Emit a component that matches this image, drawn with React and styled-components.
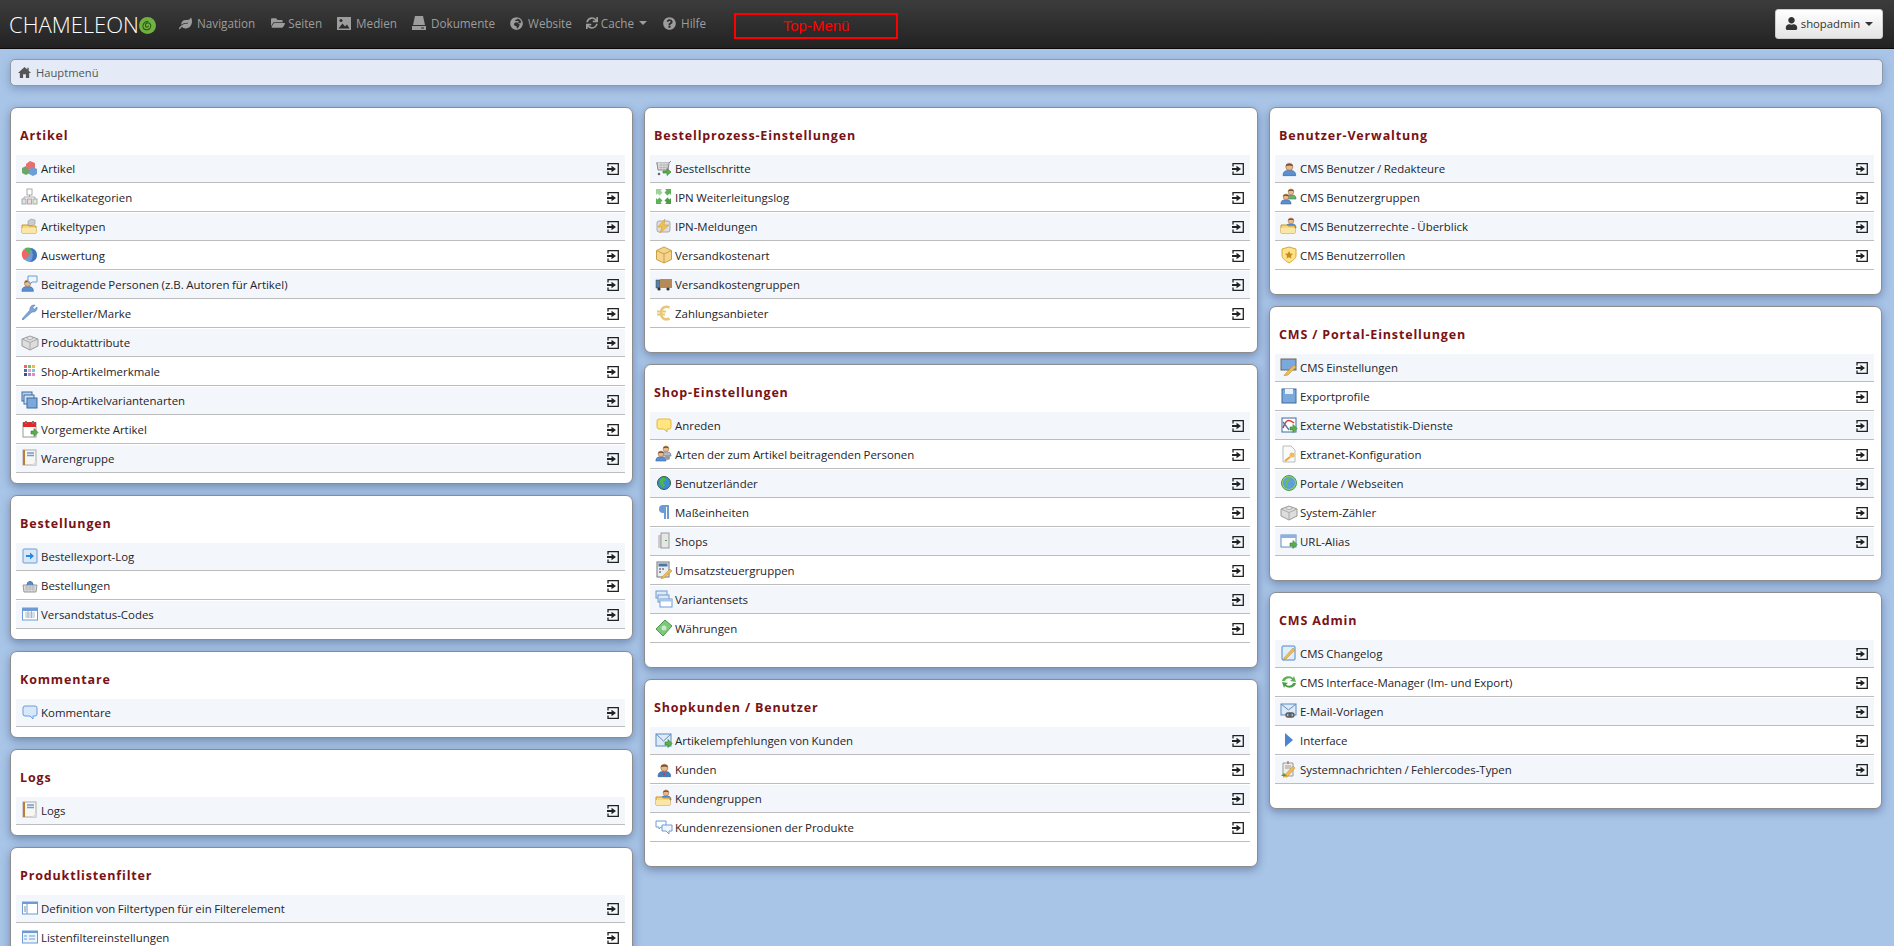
import React from 'react';
import styled, { createGlobalStyle } from 'styled-components';
import { FaLeaf, FaFolderOpen, FaGlobeAfrica, FaSync, FaQuestionCircle, FaUser } from 'react-icons/fa';

const Global = createGlobalStyle`
  html, body { margin: 0; padding: 0; height: 946px; overflow: hidden; background: #a8c4e7; }
  body { font-family: "Open Sans", "Noto Sans", sans-serif; font-size: 12px; color: #222; }
  * { box-sizing: border-box; }
`;

const TopBar = styled.header`
  height: 49px; display: flex; align-items: center; padding: 0 11px 0 9px;
  background: linear-gradient(#3c3c3c, #222222);
  border-bottom: 1px solid #0a0a0a;
`;
const Logo = styled.div`
  display: flex; align-items: center; width: 170px; color: #fff;
  font: 300 22px "Open Sans", sans-serif; letter-spacing: 0;
`;
const NavLink = styled.a`
  display: flex; align-items: center; gap: ${p => p.$gap || 5}px; color: #9d9d9d;
  font: 400 11.7px "Open Sans", sans-serif; margin-right: ${p => p.$mr || 15}px; height: 46px; padding-bottom: 2px;
  white-space: nowrap;
`;
const Caret = styled.span`
  display: inline-block; width: 0; height: 0; margin-left: 2px;
  border-top: 4px solid ${p => p.$c || '#9d9d9d'}; border-left: 4px solid transparent; border-right: 4px solid transparent;
`;
const TopMenu = styled.div`
  width: 164px; height: 26px; margin-left: 13px; margin-top: 3px; border: 2px solid #f00; color: #f00;
  font: 400 15px "Liberation Sans", sans-serif; display: flex; align-items: center; justify-content: center;
`;
const Spacer = styled.div`flex: 1;`;
const UserButton = styled.button`
  width: 108px; height: 30px; margin-bottom: 1px; border: 1px solid #ccc; border-radius: 3px;
  background: linear-gradient(#fff, #e4e4e4); color: #333; display: flex; align-items: center; justify-content: center; gap: 3px;
  font: 400 11.3px "Open Sans", sans-serif; padding: 0;
`;
const Page = styled.main`padding: 9.5px 11px 0 10px;`;
const Crumb = styled.nav`
  height: 27px; display: flex; align-items: center; gap: 5px; padding: 1px 6px 0 7px;
  background: #e4ebf7; border: 1px solid #8d98a8; border-radius: 5px;
  box-shadow: 0 3px 8px rgba(60, 80, 120, .35); color: #555; font-size: 11.2px;
`;
const Columns = styled.div`
  display: grid; grid-template-columns: 623px 614px 613px; column-gap: 11px; margin-top: 21px; align-items: start;
`;
const Column = styled.div`display: flex; flex-direction: column; gap: 11px;`;
const Card = styled.section`
  background: #fff; border: 1px solid #8d8d8d; border-radius: 7px; padding: 0 7px ${p => p.$tall ? 22.5 : 8.5}px 5px;
  box-shadow: 0 3px 9px rgba(50, 70, 110, .45);
`;
const Title = styled.h2`
  margin: 0; height: 47.5px; padding: 20px 0 0 4px; color: #7a1214;
  font: 700 12.5px/16px "Open Sans", sans-serif; letter-spacing: .84px;
`;
const Row = styled.div`
  height: 29px; display: flex; align-items: flex-start; position: relative;
  background: linear-gradient(${p => p.$odd ? '#f3f7fb' : '#fff'} 27px, #bdbdbd 27px, #bdbdbd 28px, #fff 28px);
  padding: 4px 5px 0 5px;
`;
const IconBox = styled.span`width: 20px; height: 20px; flex: none; display: block;`;
const Label = styled.span`flex: 1; line-height: 20px; font-size: 11.45px; word-spacing: -.5px; color: #24242c; white-space: nowrap;`;
const Go = styled.span`width: 13px; height: 20px; display: flex; align-items: center; color: #222;`;

const S = ({ children }) => <svg width="18" height="18" viewBox="0 0 18 18" style={{ display: 'block', marginTop: 0 }}>{children}</svg>;
const person = (x, y, shirt = '#5a8fd0', s = 1) => <g transform={`translate(${x} ${y}) scale(${s})`}><path d="M1 13c0-4 2-5 6-5s6 1 6 5z" fill={shirt} stroke="#2b5f9e" strokeWidth=".6" /><circle cx="7" cy="4.5" r="3.4" fill="#e9b98c" stroke="#8a5a30" strokeWidth=".5" /><path d="M3.6 4C4 1 10 1 10.4 4 8 3 6 3 3.6 4z" fill="#7a4a20" /></g>;
const folder = <><path d="M1 8h6l1 1h7v7H1z" fill="#f7d97c" stroke="#c9922b" /><path d="M1 11h14v5H1z" fill="#fbe7a5" /></>;
const arrow = <path d="M10 11h3V8.5l4 4-4 4V14h-3z" fill="#5cb04a" stroke="#2f7d2a" strokeWidth=".6" />;
const Bars = ({ c = '#6e9bd3' }) => <><rect x="1.5" y="3" width="15" height="12" fill="#fff" stroke={c} /><rect x="1.5" y="3" width="15" height="3" fill={c} /></>;
const corner = 'M1 1h6L5.500 2.500 7.500 4.500 4.500 7.500 2.500 5.500 1 7z';

const icons = {
  cubes: <S><path d="M1 9l4-2 4 2v5l-4 2-4-2z" fill="#6aa56a" /><path d="M5 5l4-3 5 2v5l-5 2-4-2z" fill="#e66f6f" /><path d="M8 10l4-2 4 2v5l-4 2-4-2z" fill="#6d9ed6" /></S>,
  tree: <S><rect x="6" y="1" width="5" height="6" fill="#fff" stroke="#aaa" /><path d="M8.5 7v2M3 11V9h11v2" fill="none" stroke="#aaa" /><rect x="1" y="11" width="4" height="5" fill="#d7e4f0" stroke="#aaa" /><rect x="6.5" y="11" width="4" height="5" fill="#f1d9d9" stroke="#aaa" /><rect x="12" y="11" width="4" height="5" fill="#dcedd4" stroke="#aaa" /></S>,
  boxfolder: <S><path d="M7 4l3-2 4 1v4l-4 2-3-1z" fill="#ccc" stroke="#999" strokeWidth=".6" />{folder}</S>,
  pie: <S><circle cx="9" cy="9" r="7" fill="#6d9ed6" /><path d="M9 9L3 3a8 8 0 0 1 7-1z" fill="#5bb25b" /><path d="M9 9L3 3a8 8 0 0 0 0 11z" fill="#e66" /><path d="M9 2a7 7 0 0 1 0 14 10 10 0 0 0 0-14z" fill="#4377bd" /></S>,
  personTalk: <S>{person(0, 4, '#5a8fd0', .95)}<path d="M7 1h9v6h-5l-2 2V7H7z" fill="#eef5fc" stroke="#6e9bd3" /></S>,
  wrench: <S><path d="M2 16l-1-1 8-9c-.5-2 1-5 4-5l1 .3-2.3 2.4 1.6 1.6L16 3c.6 3-2 5.6-5 5z" fill="#7fa6d8" stroke="#4f79ae" strokeWidth=".6" /></S>,
  lego: <S><path d="M1 6l8-3 8 3v7l-8 4-8-4z" fill="#ddd" stroke="#999" /><path d="M1 6l8 3.5 8-3.5M9 9.5V17" fill="none" stroke="#aaa" /><ellipse cx="9" cy="5" rx="3" ry="1.4" fill="#f2f2f2" stroke="#aaa" /></S>,
  grid: <S><g transform="translate(3 3)"><rect width="3" height="3" fill="#e66" /><rect x="4" width="3" height="3" fill="#6bc06b" /><rect x="8" width="3" height="3" fill="#f2b84b" /><rect y="4" width="3" height="3" fill="#4d6fa8" /><rect x="4" y="4" width="3" height="3" fill="#e9a1c2" /><rect x="8" y="4" width="3" height="3" fill="#7bc7d6" /><rect y="8" width="3" height="3" fill="#39528a" /><rect x="4" y="8" width="3" height="3" fill="#ad85d6" /><rect x="8" y="8" width="3" height="3" fill="#ea86c9" /></g></S>,
  windows: <S><rect x="1" y="1" width="10" height="9" fill="#b9d3ee" stroke="#3c6b9f" /><rect x="3" y="4" width="10" height="9" fill="#d2e2f3" stroke="#3c6b9f" /><rect x="6" y="7" width="10" height="10" fill="#7ba9dc" stroke="#3c6b9f" /></S>,
  calendar: <S><rect x="2" y="3" width="13" height="14" fill="#fff" stroke="#999" /><rect x="2" y="2" width="13" height="5" fill="#e02a2a" /><rect x="4" y="1" width="2" height="3" fill="#777" /><rect x="11" y="1" width="2" height="3" fill="#777" />{arrow}</S>,
  book: <S><rect x="2" y="1" width="13" height="15" fill="#f7f6f0" stroke="#aaa" /><rect x="2" y="1" width="2" height="15" fill="#c27a3a" /><path d="M6 4h7M6 6.5h7" stroke="#6e9bd3" strokeWidth="1.4" /><path d="M11 16l4-4v4z" fill="#ddd" /></S>,
  cart: <S><path d="M1 4h13l2-2" fill="none" stroke="#888" /><path d="M2 4l1 7h10l1-7" fill="#ddd" stroke="#888" /><path d="M4 6h9M4 8.5h9M6 4v7M9 4v7M12 4v7" stroke="#aaa" strokeWidth=".6" /><circle cx="4" cy="15" r="1.3" fill="#666" /><path d="M8 12h4V9.5l4 3.5-4 3.5V14H8z" fill="#5cb04a" stroke="#2f7d2a" strokeWidth=".6" /></S>,
  expand: <S><path d={corner} fill="#9fd29a" /><path d={corner} fill="#5fb058" transform="matrix(-1 0 0 1 17 0)" /><path d={corner} fill="#5fb058" transform="matrix(1 0 0 -1 0 17)" /><path d={corner} fill="#4d9b46" transform="matrix(-1 0 0 -1 17 17)" /></S>,
  bolt: <S><rect x="2" y="4" width="13" height="11" rx="2" fill="#ddd" stroke="#aaa" /><path d="M10 2L3 10h4l-2 6 9-8H9z" fill="#f2c14e" stroke="#c9922b" strokeWidth=".5" /></S>,
  box: <S><path d="M9 1l7.5 3.5v9L9 17l-7.5-3.5v-9z" fill="#f5d58c" stroke="#c9a04a" /><path d="M1.5 4.5L9 8l7.5-3.5M9 8v9" fill="none" stroke="#c9a04a" /></S>,
  truck: <S><rect x="1" y="5" width="4" height="8" fill="#5a7fa8" stroke="#344" strokeWidth=".5" /><rect x="5" y="4" width="12" height="9" fill="#b68a58" /><circle cx="4" cy="14" r="1.6" fill="#333" /><circle cx="13" cy="14" r="1.6" fill="#333" /></S>,
  euro: <S><path d="M14.500 3.500C10.500 1.500 6 3.500 6 9s4.500 7.500 8.500 5.500" fill="none" stroke="#e8c877" strokeWidth="2.600" /><path d="M2 7.500h9M2 10.500h8" stroke="#e8c877" strokeWidth="1.800" /></S>,
  bubbleY: <S><path d="M2 5a2 2 0 0 1 2-2h10a2 2 0 0 1 2 2v6a2 2 0 0 1-2 2h-2v3l-3-3H4a2 2 0 0 1-2-2z" fill="#ffe680" stroke="#e3b93c" /></S>,
  people: <S>{person(5, 0, '#b9b9b9', .85)}{person(0, 5, '#5a8fd0', .85)}<circle cx="12.5" cy="12.5" r="2.5" fill="#999" /></S>,
  globe: <S><circle cx="9" cy="9" r="6.5" fill="#3f87d8" stroke="#2a6b2a" /><path d="M5 5l4-2 2 3-3 2 2 3-2 3-3-4z" fill="#4cb54c" /></S>,
  pilcrow: <S><path d="M14 2H8a4 4 0 0 0 0 8h1v6h2V4h1v12h2z" fill="#6e9bd3" /></S>,
  server: <S><rect x="3" y="3" width="4" height="13" fill="#ccc" /><rect x="6" y="1" width="8" height="15" fill="#e6e6e6" stroke="#999" /><rect x="10" y="8" width="2" height="1" fill="#4a4" /></S>,
  calc: <S><rect x="2" y="1" width="12" height="15" fill="#e9eef3" stroke="#777" /><rect x="3.5" y="2.5" width="9" height="3" fill="#4d76a8" /><path d="M4 8h2M7 8h2M4 11h2" stroke="#777" strokeWidth="1.3" /><path d="M7 16l8-8 2 2-8 7-3 1z" fill="#f0bb54" stroke="#b9862a" strokeWidth=".5" /></S>,
  sets: <S><rect x="1" y="1" width="11" height="7" fill="#dde9f6" stroke="#6e9bd3" /><rect x="3" y="5" width="11" height="7" fill="#dde9f6" stroke="#6e9bd3" /><rect x="5" y="9" width="12" height="8" fill="#fff" stroke="#6e9bd3" /><rect x="5" y="9" width="12" height="2.5" fill="#a7c6ea" /></S>,
  money: <S><path d="M1 10l9-9 7 6-9 10z" fill="#7fc77f" stroke="#4a9a4a" /><circle cx="9" cy="9" r="2.5" fill="#c9eac9" /></S>,
  mailArrow: <S><rect x="1" y="3" width="15" height="12" fill="#dfeaf6" stroke="#5d8cc0" /><path d="M1 3l7.5 7L16 3" fill="none" stroke="#5d8cc0" />{arrow}</S>,
  person: <S>{person(2, 3, '#5a8fd0', 1.05)}</S>,
  personSuit: <S>{person(2, 3, '#4a7cbd', 1.05)}<path d="M9 12l-1 3h2z" fill="#d33" /></S>,
  bubbles: <S><path d="M1 3h10v6H6l-2 2V9H1z" fill="#fff" stroke="#6e9bd3" /><path d="M7 7h10v6h-3v3l-3-3H7z" fill="#eef5fc" stroke="#6e9bd3" /></S>,
  arrowDoc: <S><rect x="2" y="2" width="14" height="14" rx="1" fill="#d9e8f8" stroke="#6e9bd3" /><path d="M5 8h4V5.500l4 3.500-4 3.500V10H5z" fill="#2f86d8" /></S>,
  basket: <S><path d="M2 9h14l-1 7H3z" fill="#ddd" stroke="#999" /><path d="M6 9a3 3.5 0 0 1 6 0" fill="#5d8cc0" stroke="#4a76a8" /><path d="M4 11h10M4 13h10M6 9v7M9 9v7M12 9v7" stroke="#aaa" strokeWidth=".6" /></S>,
  table: <S><Bars c="#6e9bd3" /><path d="M4 8h10M4 10h10M4 12h10M7 6v7M10.5 6v7" stroke="#9ab" strokeWidth=".8" /></S>,
  bubbleB: <S><path d="M2 5a2 2 0 0 1 2-2h10a2 2 0 0 1 2 2v6a2 2 0 0 1-2 2h-2v3l-3-3H4a2 2 0 0 1-2-2z" fill="#d7e8fa" stroke="#6e9bd3" /></S>,
  panel: <S><rect x="1.5" y="3" width="15" height="12" fill="#fff" stroke="#6e9bd3" /><rect x="1.5" y="3" width="15" height="2" fill="#6e9bd3" /><path d="M6 5v10" stroke="#6e9bd3" /><path d="M3 8h2M3 10h2M3 12h2" stroke="#888" /></S>,
  listbox: <S><rect x="1.5" y="3" width="15" height="12" fill="#eef4fb" stroke="#6e9bd3" /><rect x="1.5" y="3" width="15" height="2" fill="#6e9bd3" /><path d="M3 8h3M3 11h3M8 8h6M8 11h6" stroke="#6e9bd3" /></S>,
  personGreen: <S>{person(5, 0, '#6bb45e', .85)}{person(0, 5, '#5a8fd0', .85)}</S>,
  personFolder: <S>{person(5, 0, '#5a8fd0', .85)}{folder}</S>,
  shield: <S><path d="M2 3l7-2 7 2v6c0 4-4 6-7 8-3-2-7-4-7-8z" fill="#ffe28a" stroke="#d6a93a" /><path d="M9 5l1.2 2.5 2.8.3-2 2 .5 2.700L9 11.2l-2.500 1.300.5-2.700-2-2 2.800-.3z" fill="#c98a1e" /></S>,
  monitorPen: <S><rect x="1" y="1" width="15" height="11" fill="#7ba9dc" stroke="#666" /><path d="M5 16l9-9 2 2-8 8-4 1z" fill="#f0bb54" stroke="#b9862a" strokeWidth=".5" /></S>,
  floppy: <S><rect x="2" y="2" width="14" height="14" fill="#7ba9dc" stroke="#3f6a9d" /><rect x="5" y="2" width="8" height="5" fill="#e9f1fa" /></S>,
  chartArrow: <S><rect x="2" y="2" width="14" height="14" fill="#fff" stroke="#3c6b9f" /><path d="M3 12c3-9 6-9 11-5" fill="none" stroke="#d33" strokeWidth="1.5" /><path d="M3 6l6 8" stroke="#4d76a8" strokeWidth="1.3" />{arrow}</S>,
  docKey: <S><path d="M3 1h8l4 4v12H3z" fill="#fafafa" stroke="#bbb" /><circle cx="12" cy="10" r="2.5" fill="#f0bb54" /><path d="M10 12l-5 4" stroke="#e0a93a" strokeWidth="2" /></S>,
  globeBig: <S><circle cx="9" cy="9" r="7.5" fill="#8fcf82" stroke="#4e9a48" /><path d="M9 3a6 6 0 1 1 0 12 6 6 0 0 1 0-12z" fill="#5e9dde" /><path d="M5 6l4-2 1 3-3 2 2 3-3 1z" fill="#68bc5e" /></S>,
  windowArrow: <S><rect x="1" y="3" width="15" height="12" fill="#fff" stroke="#5d8cc0" /><rect x="1" y="3" width="15" height="3" fill="#8ab3e2" />{arrow}</S>,
  pen: <S><rect x="2" y="2" width="13" height="14" rx="1" fill="#dfeefb" stroke="#4f88c7" /><path d="M4 14l9-10 2 2-9 9-3 1z" fill="#f0bb54" stroke="#b9862a" strokeWidth=".5" /></S>,
  sync: <S><path d="M2 8c1-5 8-6 11-3l1-2 2 6-6-1 2-1.5C10 4.500 6 5 5 8z" fill="#5fb058" /><path d="M16 10c-1 5-8 6-11 3l-1 2-2-6 6 1-2 1.500C8 13.500 12 13 13 10z" fill="#4d9b46" /></S>,
  mailLink: <S><rect x="1" y="2" width="15" height="11" fill="#dfeaf6" stroke="#5d8cc0" /><path d="M1 2l7.5 6L16 2" fill="none" stroke="#5d8cc0" /><rect x="6" y="11" width="5" height="4" rx="2" fill="none" stroke="#555" strokeWidth="1.3" /><rect x="9" y="11" width="5" height="4" rx="2" fill="none" stroke="#555" strokeWidth="1.3" /></S>,
  play: <S><path d="M5 2l8 7-8 7z" fill="#4a86d0" /></S>,
  notePen: <S><path d="M3 3h10v13H3z" fill="#efefe6" stroke="#999" /><path d="M5 6h6M5 8h6" stroke="#99a" /><path d="M8 1v3" stroke="#d33" /><path d="M3 17l10-11 2 2-8 9z" fill="#f0bb54" stroke="#b9862a" strokeWidth=".5" /><path d="M1 16l3-3 3 3z" fill="#5e9a48" /></S>,
};

const data = [
  { cards: [
    ['Artikel', [['cubes', 'Artikel'], ['tree', 'Artikelkategorien'], ['boxfolder', 'Artikeltypen'], ['pie', 'Auswertung'], ['personTalk', 'Beitragende Personen (z.B. Autoren für Artikel)'], ['wrench', 'Hersteller/Marke'], ['lego', 'Produktattribute'], ['grid', 'Shop-Artikelmerkmale'], ['windows', 'Shop-Artikelvariantenarten'], ['calendar', 'Vorgemerkte Artikel'], ['book', 'Warengruppe']]],
    ['Bestellungen', [['arrowDoc', 'Bestellexport-Log'], ['basket', 'Bestellungen'], ['table', 'Versandstatus-Codes']]],
    ['Kommentare', [['bubbleB', 'Kommentare']]],
    ['Logs', [['book', 'Logs']]],
    ['Produktlistenfilter', [['panel', 'Definition von Filtertypen für ein Filterelement'], ['listbox', 'Listenfiltereinstellungen']]],
  ] },
  { tall: true, cards: [
    ['Bestellprozess-Einstellungen', [['cart', 'Bestellschritte'], ['expand', 'IPN Weiterleitungslog'], ['bolt', 'IPN-Meldungen'], ['box', 'Versandkostenart'], ['truck', 'Versandkostengruppen'], ['euro', 'Zahlungsanbieter']]],
    ['Shop-Einstellungen', [['bubbleY', 'Anreden'], ['people', 'Arten der zum Artikel beitragenden Personen'], ['globe', 'Benutzerländer'], ['pilcrow', 'Maßeinheiten'], ['server', 'Shops'], ['calc', 'Umsatzsteuergruppen'], ['sets', 'Variantensets'], ['money', 'Währungen']]],
    ['Shopkunden / Benutzer', [['mailArrow', 'Artikelempfehlungen von Kunden'], ['personSuit', 'Kunden'], ['personFolder', 'Kundengruppen'], ['bubbles', 'Kundenrezensionen der Produkte']]],
  ] },
  { tall: true, cards: [
    ['Benutzer-Verwaltung', [['person', 'CMS Benutzer / Redakteure'], ['personGreen', 'CMS Benutzergruppen'], ['personFolder', 'CMS Benutzerrechte - Überblick'], ['shield', 'CMS Benutzerrollen']]],
    ['CMS / Portal-Einstellungen', [['monitorPen', 'CMS Einstellungen'], ['floppy', 'Exportprofile'], ['chartArrow', 'Externe Webstatistik-Dienste'], ['docKey', 'Extranet-Konfiguration'], ['globeBig', 'Portale / Webseiten'], ['lego', 'System-Zähler'], ['windowArrow', 'URL-Alias']]],
    ['CMS Admin', [['pen', 'CMS Changelog'], ['sync', 'CMS Interface-Manager (Im- und Export)'], ['mailLink', 'E-Mail-Vorlagen'], ['play', 'Interface'], ['notePen', 'Systemnachrichten / Fehlercodes-Typen']]],
  ] },
];

const PictureGlyph = () => (
  <svg width="14" height="13" viewBox="0 0 14 13"><rect width="14" height="13" fill="#9d9d9d" /><path d="M1.5 11.5l4-5 2.5 3 2-2 2.5 4z" fill="#2c2c2c" /><circle cx="4" cy="3.5" r="1.5" fill="#2c2c2c" /></svg>
);
const HddGlyph = () => (
  <svg width="14" height="14" viewBox="0 0 14 14"><path d="M3 0h8l2 9H1z" fill="#9d9d9d" /><path d="M0 10h14v4H0z" fill="#9d9d9d" /><rect x="9" y="11.5" width="3" height="1" fill="#2c2c2c" /></svg>
);
const HomeGlyph = () => (
  <svg width="13" height="13" viewBox="0 0 14 14"><path d="M7 1L0 7.500h2V13h3.500V9h3v4H12V7.500h2l-2.500-2.300V2H10v1.800z" fill="#555" /></svg>
);
const EnterGlyph = () => (
  <svg width="12" height="12" viewBox="0 0 12 12"><path d="M1 3.500V.7h10.300v10.600H1V8.500" fill="none" stroke="#222" strokeWidth="1.300" /><path d="M0 5h4.500V2.700L9 6l-4.500 3.300V7H0z" fill="#222" /></svg>
);
const LogoMark = () => (
  <svg width="17" height="17" viewBox="0 0 18 18" style={{ marginLeft: 0, marginTop: 3 }}>
    <circle cx="9" cy="9" r="9" fill="#6fb23e" />
    <path d="M9.5 9.5c1 .5-.5 1.800-1.800 1-1.700-1-1-4 1.300-4.300 3-.3 4.500 3 2.800 5.500-1.700 2.300-5 2.500-7 .5-2-3 .5-8 5-7.500" fill="none" stroke="#2d5a1c" strokeWidth="1.200" />
  </svg>
);

export default function App() {
  return (
    <>
      <Global />
      <TopBar>
        <Logo>CHAMELEON<LogoMark /></Logo>
        <NavLink $mr={16}><FaLeaf size={13} />Navigation</NavLink>
        <NavLink $gap={3}><FaFolderOpen size={14} />Seiten</NavLink>
        <NavLink><PictureGlyph />Medien</NavLink>
        <NavLink><HddGlyph />Dokumente</NavLink>
        <NavLink $mr={14}><FaGlobeAfrica size={13} />Website</NavLink>
        <NavLink $gap={3} $mr={16}><FaSync size={12} />Cache<Caret /></NavLink>
        <NavLink><FaQuestionCircle size={13} />Hilfe</NavLink>
        <TopMenu>Top-Menü</TopMenu>
        <Spacer />
        <UserButton><FaUser size={13} />shopadmin<Caret $c="#333" /></UserButton>
      </TopBar>
      <Page>
        <Crumb><HomeGlyph />Hauptmenü</Crumb>
        <Columns>
          {data.map((col, i) => (
            <Column key={i}>
              {col.cards.map(([title, rows]) => (
                <Card key={title} $tall={col.tall}>
                  <Title>{title}</Title>
                  {rows.map(([icon, label], r) => (
                    <Row key={label} $odd={r % 2 === 0}>
                      <IconBox>{icons[icon]}</IconBox>
                      <Label>{label}</Label>
                      <Go><EnterGlyph /></Go>
                    </Row>
                  ))}
                </Card>
              ))}
            </Column>
          ))}
        </Columns>
      </Page>
    </>
  );
}
